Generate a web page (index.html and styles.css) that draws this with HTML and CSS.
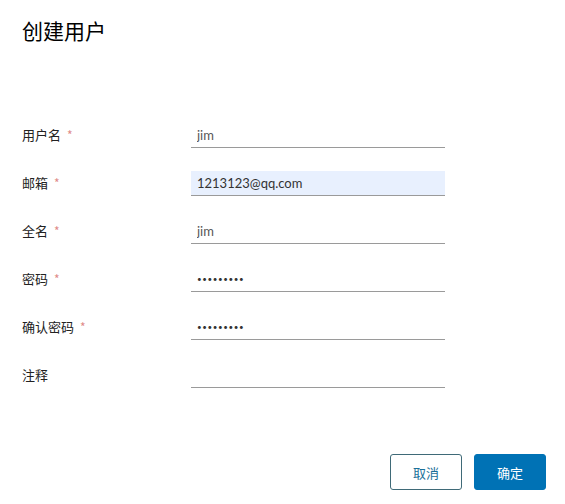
FILE: index.html
```html
<!DOCTYPE html>
<html lang="zh">
<head>
<meta charset="utf-8">
<link rel="stylesheet" href="styles.css">
</head>
<body>
<div class="modal">
  <h3 class="title">创建用户</h3>
  <form class="form">
    <div class="row">
      <label class="label">用户名 <span class="req">*</span></label>
      <input class="field" type="text" value="jim">
    </div>
    <div class="row">
      <label class="label">邮箱 <span class="req">*</span></label>
      <input class="field autofill" type="text" value="1213123@qq.com">
    </div>
    <div class="row">
      <label class="label">全名 <span class="req">*</span></label>
      <input class="field" type="text" value="jim">
    </div>
    <div class="row">
      <label class="label">密码 <span class="req">*</span></label>
      <input class="field pw" type="password" value="123456789">
    </div>
    <div class="row">
      <label class="label">确认密码 <span class="req">*</span></label>
      <input class="field pw" type="password" value="123456789">
    </div>
    <div class="row">
      <label class="label">注释</label>
      <input class="field" type="text" value="">
    </div>
  </form>
  <div class="footer">
    <button class="btn btn-outline" type="button">取消</button>
    <button class="btn btn-primary" type="button">确定</button>
  </div>
</div>
</body>
</html>
```

FILE: styles.css
```css
* { box-sizing: border-box; }
html, body {
  margin: 0;
  padding: 0;
  background: #fff;
}
body {
  font-family: "Noto Sans CJK SC", "Open Sans", sans-serif;
  color: #222;
}
.modal {
  width: 565px;
  height: 504px;
  padding: 0 19px 0 22px;
  display: flex;
  flex-direction: column;
}
.title {
  margin: 15px 0 0 0;
  font-size: 21px;
  font-weight: 400;
  line-height: 30px;
  color: #000;
}
.form {
  margin-top: 78px;
  display: flex;
  flex-direction: column;
  gap: 23px;
}
.row {
  display: flex;
  align-items: center;
  height: 25px;
}
.label {
  width: 169px;
  font-size: 13px;
  color: #222;
  line-height: 20px;
  margin-top: -2px;
}
.req {
  color: #e08a8a;
  margin-left: 3px;
  font-size: 12px;
}
.field {
  width: 254px;
  height: 25px;
  border: none;
  border-bottom: 1px solid #9a9a9a;
  padding: 0 6px;
  font-family: "Lato", "Open Sans", sans-serif;
  font-size: 13px;
  color: #565656;
  background: transparent;
  outline: none;
}
.autofill {
  background: #e8f0fe;
  color: #333;
}
.pw {
  font-size: 8px;
  letter-spacing: 0.6px;
  color: #333;
}
.footer {
  margin-top: 66px;
  display: flex;
  justify-content: flex-end;
  gap: 12px;
}
.btn {
  width: 72px;
  height: 36px;
  border-radius: 3px;
  font-family: "Noto Sans CJK SC", sans-serif;
  font-size: 13px;
  cursor: pointer;
}
.btn-outline {
  background: #fff;
  border: 1px solid #3f6a78;
  color: #1a6f99;
}
.btn-primary {
  background: #0072b5;
  border: 1px solid #0072b5;
  color: #fff;
}
```
